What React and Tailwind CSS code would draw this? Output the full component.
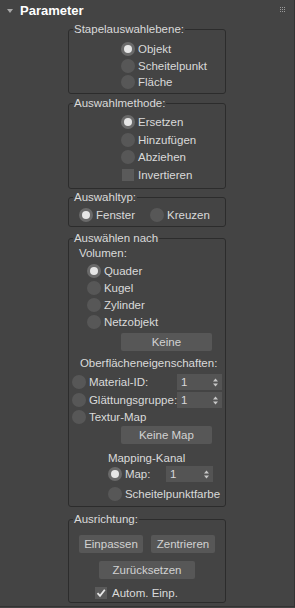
import React from "react";

const font = { fontFamily: '"Liberation Sans", Arial, sans-serif' };

function Radio({ checked }) {
  return (
    <span className={"relative flex h-[14px] w-[14px] shrink-0 items-center justify-center rounded-full " + (checked ? "bg-[#6a6a6a]" : "bg-[#575757]")}>
      {checked && <span className="block h-[8px] w-[8px] rounded-full bg-[#e6e6e6]" />}
    </span>
  );
}

function Check({ checked }) {
  return (
    <span className="flex h-[12px] w-[12px] shrink-0 items-center justify-center bg-[#5a5a5a]">
      {checked && (
        <svg width="10" height="10" viewBox="0 0 10 10">
          <path d="M1.5 5.2 L4 7.8 L8.8 1.8" fill="none" stroke="#e8e8e8" strokeWidth="1.8" />
        </svg>
      )}
    </span>
  );
}

function Btn({ children, className }) {
  return (
    <div className={"flex h-[18px] items-center justify-center rounded-[2px] bg-[#575757] text-[#d2d2d2] " + className}>
      {children}
    </div>
  );
}

function Spinner({ className }) {
  return (
    <div className={"flex h-[16px] items-center justify-between bg-[#545454] pl-[4px] pr-[4px] text-[#d8d8d8] " + className}>
      <span>1</span>
      <svg width="5" height="9" viewBox="0 0 5 9">
        <path d="M0 3.5 L2.5 0.5 L5 3.5 Z" fill="#c8c8c8" />
        <path d="M0 5.5 L2.5 8.5 L5 5.5 Z" fill="#c8c8c8" />
      </svg>
    </div>
  );
}

function Group({ title, children, className }) {
  return (
    <fieldset className={"mx-auto w-[158px] rounded-[3px] border border-[#2c2c2c] p-0 " + className}>
      <legend className="ml-[4px] px-[1px] text-[11.5px] leading-[14px] text-[#dadada]">{title}</legend>
      {children}
    </fieldset>
  );
}

function RadioRow({ checked, label, className }) {
  return (
    <div className={"flex items-center gap-[3px] " + className}>
      <Radio checked={checked} />
      <span>{label}</span>
    </div>
  );
}

export default function App() {
  return (
    <div className="h-[608px] w-[295px] bg-[#444444] text-[11.5px] leading-[14px] text-[#dadada]" style={font}>
      <div className="h-[607px] border-r border-b border-[#333333]">
        {/* header */}
        <div className="flex h-[22px] items-start pt-[3px]">
          <svg className="ml-[7px] mt-[6px]" width="6" height="4" viewBox="0 0 6 4">
            <path d="M0 0 L6 0 L3 4 Z" fill="#a8a8a8" />
          </svg>
          <span className="ml-[7px] text-[13px] font-bold leading-[16px] text-white">Parameter</span>
          <svg className="ml-auto mr-[9px] mt-[4px]" width="5" height="5" viewBox="0 0 5 5">
            {[0, 2, 4].map((x) =>
              [0, 2, 4].map((y) => <rect key={x + "-" + y} x={x} y={y} width="1" height="1" fill="#9a9a9a" />)
            )}
          </svg>
        </div>

        <Group title="Stapelauswahlebene:" className="h-[72px]">
          <div className="flex flex-col pt-[5px] pl-[52px]">
            <RadioRow checked label="Objekt" className="h-[16.5px]" />
            <RadioRow label="Scheitelpunkt" className="h-[16.5px]" />
            <RadioRow label="Fläche" className="h-[16.5px]" />
          </div>
        </Group>

        <Group title="Auswahlmethode:" className="mt-[2px] h-[93px]">
          <div className="flex flex-col pt-[3.5px] pl-[52px]">
            <RadioRow checked label="Ersetzen" className="h-[17.5px]" />
            <RadioRow label="Hinzufügen" className="h-[17.5px]" />
            <RadioRow label="Abziehen" className="h-[17.5px]" />
            <div className="flex h-[17.5px] items-center gap-[4px] pl-[1px]">
              <Check />
              <span>Invertieren</span>
            </div>
          </div>
        </Group>

        <Group title="Auswahltyp:" className="mt-[1px] h-[37px]">
          <div className="flex h-[16px] items-center pl-[10px] mt-[3px]">
            <RadioRow checked label="Fenster" className="w-[71px]" />
            <RadioRow label="Kreuzen" />
          </div>
        </Group>

        <Group title="Auswählen nach" className="mt-[4px] h-[276px]">
          <div className="flex flex-col">
            <div className="mt-[1px] h-[14px] pl-[10px]">Volumen:</div>
            <div className="mt-[2px] flex flex-col pl-[18px]">
              <RadioRow checked label="Quader" className="h-[17px]" />
              <RadioRow label="Kugel" className="h-[17px]" />
              <RadioRow label="Zylinder" className="h-[17px]" />
              <RadioRow label="Netzobjekt" className="h-[17px]" />
            </div>
            <Btn className="ml-[52px] mt-[3px] w-[91px]">Keine</Btn>
            <div className="mt-[5px] h-[14px] pl-[11px]">Oberflächeneigenschaften:</div>
            <div className="mt-[3px] flex h-[18px] items-center justify-between pl-[3px] pr-[3px]">
              <RadioRow label="Material-ID:" />
              <Spinner className="w-[45px]" />
            </div>
            <div className="flex h-[18px] items-center justify-between pl-[3px] pr-[3px]">
              <RadioRow label="Glättungsgruppe:" />
              <Spinner className="w-[45px]" />
            </div>
            <RadioRow label="Textur-Map" className="h-[16px] pl-[3px]" />
            <Btn className="ml-[52px] mt-[1px] w-[91px]">Keine Map</Btn>
            <div className="mt-[7px] h-[14px] pl-[39px]">Mapping-Kanal</div>
            <div className="mt-[1px] flex h-[16px] items-center pl-[39px]">
              <RadioRow checked label="Map:" className="w-[58px]" />
              <Spinner className="w-[47px]" />
            </div>
            <RadioRow label="Scheitelpunktfarbe" className="mt-[4px] h-[16px] pl-[39px]" />
          </div>
        </Group>

        <Group title="Ausrichtung:" className="mt-[5px] h-[91px]">
          <div className="flex flex-col">
            <div className="mt-[9px] flex gap-[8px] pl-[10px]">
              <Btn className="w-[64px]">Einpassen</Btn>
              <Btn className="w-[64px]">Zentrieren</Btn>
            </div>
            <Btn className="ml-[30px] mt-[8px] w-[96px]">Zurücksetzen</Btn>
            <div className="mt-[6px] flex h-[16px] items-center gap-[5px] pl-[26px]">
              <Check checked />
              <span>Autom. Einp.</span>
            </div>
          </div>
        </Group>
      </div>
    </div>
  );
}
